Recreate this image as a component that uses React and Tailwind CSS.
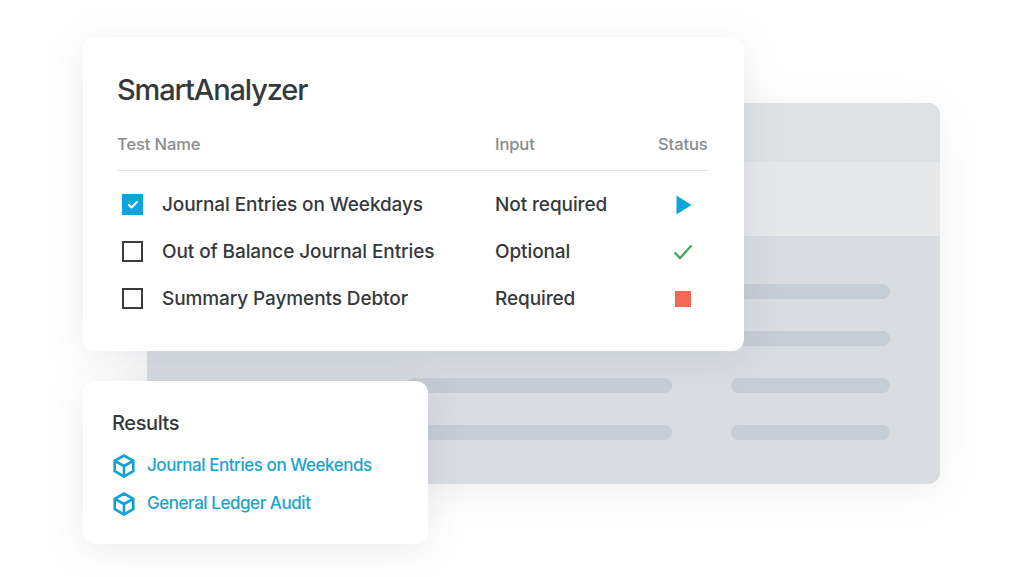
import { Check } from 'lucide-react';

const tests = [
  { name: 'Journal Entries on Weekdays', input: 'Not required', status: 'run', checked: true },
  { name: 'Out of Balance Journal Entries', input: 'Optional', status: 'done', checked: false },
  { name: 'Summary Payments Debtor', input: 'Required', status: 'stop', checked: false },
];

const results = ['Journal Entries on Weekends', 'General Ledger Audit'];

function StatusIcon({ status }) {
  if (status === 'run') {
    return (
      <svg width="16" height="20" viewBox="0 0 16 20" className="ml-[2px]">
        <path d="M0.5 0.5 L15.5 10 L0.5 19.5 Z" fill="#0ca5dc" />
      </svg>
    );
  }
  if (status === 'done') {
    return (
      <svg width="20" height="16" viewBox="0 0 20 16" fill="none">
        <path d="M1.5 8.5 L7 14 L18.5 1.5" stroke="#45a860" strokeWidth="2.4" />
      </svg>
    );
  }
  return <div className="w-[16px] h-[16px] bg-[#f46855]" />;
}

function CubeIcon() {
  return (
    <svg width="22" height="24" viewBox="0 0 22 24" fill="none" stroke="#12a3d6" strokeWidth="2.6" strokeLinejoin="round" strokeLinecap="round" className="ml-[1px]">
      <path d="M11 1.5 L20.3 6.8 V17.2 L11 22.5 L1.7 17.2 V6.8 Z" />
      <path d="M2 7 L11 12 L20 7 M11 12 V22.2" />
    </svg>
  );
}

function Bars() {
  return (
    <div className="flex items-center gap-[59px] justify-end pr-[50px]">
      <div className="w-[266px] h-[15px] rounded-full bg-[#c7cdd5]" />
      <div className="w-[159px] h-[15px] rounded-full bg-[#c7cdd5]" />
    </div>
  );
}

export default function App() {
  return (
    <div className="relative w-[1024px] h-[577px] bg-white overflow-hidden font-['Inter',sans-serif] text-[#36393b]">
      {/* panel de fondo */}
      <div className="ml-[147px] mt-[103px] w-[793px] h-[381px] rounded-[12px] overflow-hidden flex flex-col bg-[#d9dde2] shadow-[0_8px_40px_rgba(60,70,90,0.08)]">
        <div className="h-[59px] bg-[#dfe2e5]" />
        <div className="h-[74px] bg-[#e6e8ea]" />
        <div className="flex flex-col gap-[32px] pt-[48px]">
          <Bars />
          <Bars />
          <Bars />
          <Bars />
        </div>
      </div>

      {/* tarjeta principal */}
      <div className="absolute left-[83px] top-[37px] w-[661px] h-[314px] bg-white rounded-[12px] shadow-[0_6px_40px_rgba(60,70,90,0.10)] pl-[35px] pr-[35px] pt-[34px]">
        <h1 className="text-[29px] leading-[38px] font-medium tracking-[-1.15px] -ml-[1px]">SmartAnalyzer</h1>
        <div className="flex items-center h-[55px] mt-[7px] pt-[2px] text-[16.5px] font-[450] tracking-[-0.1px] text-[#8a8c8e] border-b border-[#e3e5e7]">
          <div className="w-[378px] -ml-[1px]">Test Name</div>
          <div className="w-[163px]">Input</div>
          <div>Status</div>
        </div>
        <div className="flex flex-col gap-[7px] pt-[14px]">
          {tests.map((t) => (
            <div key={t.name} className="flex items-center h-[40px] text-[19px] font-[450] tracking-[-0.1px]">
              <div className="w-[44px] pl-[4px] -mt-[1px]">
                {t.checked ? (
                  <div className="w-[21px] h-[21px] bg-[#0ca5dc] flex items-center justify-center">
                    <Check className="w-[12px] h-[12px] text-white" strokeWidth={4} />
                  </div>
                ) : (
                  <div className="w-[21px] h-[21px] border-2 border-[#3a3c3e]" />
                )}
              </div>
              <div className="w-[333px]">{t.name}</div>
              <div className="w-[164px]">{t.input}</div>
              <div className="w-[48px] flex justify-center">
                <StatusIcon status={t.status} />
              </div>
            </div>
          ))}
        </div>
      </div>

      {/* resultados */}
      <div className="absolute left-[83px] top-[381px] w-[345px] h-[163px] bg-white rounded-[12px] shadow-[0_6px_40px_rgba(60,70,90,0.10)] pl-[29px] pt-[28px]">
        <div className="text-[20px] leading-[28px] font-[450] tracking-[-0.4px]">Results</div>
        <div className="flex flex-col gap-[14px] mt-[17px]">
          {results.map((r) => (
            <div key={r} className="flex items-center gap-[12px] h-[24px] text-[17px] font-[450] text-[#1ba3d1] tracking-[-0.45px]">
              <CubeIcon />
              <span>{r}</span>
            </div>
          ))}
        </div>
      </div>
    </div>
  );
}
